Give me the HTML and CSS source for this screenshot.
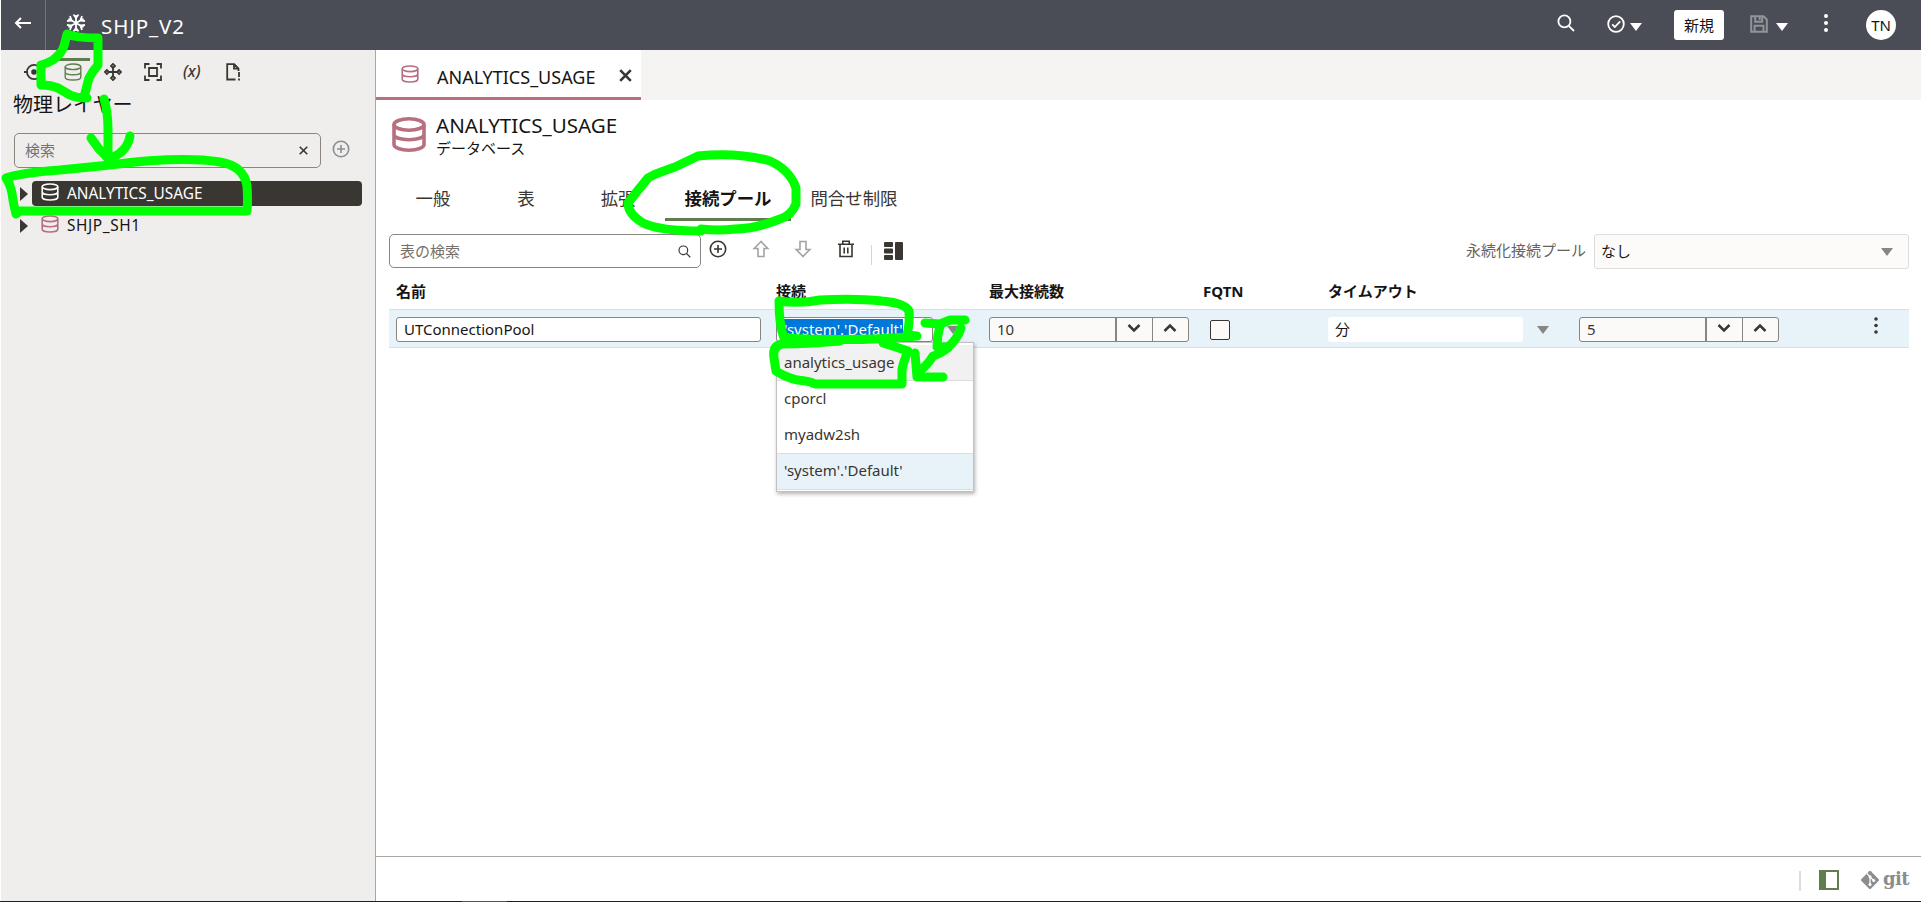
FILE: index.html
```html
<!DOCTYPE html>
<html lang="ja">
<head>
  <meta charset="UTF-8" />
  <meta name="viewport" content="width=device-width, initial-scale=1.0"/>
  <title>SHJP_V2</title>
  <link rel="stylesheet" href="styles.css">
</head>
<body>

  <svg class="symbols" width="0" height="0">
    <symbol id="db" viewBox="0 0 18 18">
      <ellipse cx="9" cy="3.8" rx="7.8" ry="2.8"/>
      <path d="M1.2 3.8v10.4c0 1.6 3.5 2.8 7.8 2.8s7.8-1.2 7.8-2.8V3.8M1.2 9c0 1.6 3.5 2.8 7.8 2.8s7.8-1.2 7.8-2.8"/>
    </symbol>
    <symbol id="plus" viewBox="0 0 18 18">
      <circle cx="9" cy="9" r="7.7"/>
      <path d="M9 5v8M5 9h8"/>
    </symbol>
    <symbol id="search" viewBox="0 0 18 18">
      <circle cx="7.4" cy="7.4" r="6"/>
      <path d="M11.8 11.8l5.2 5.2"/>
    </symbol>
    <symbol id="down" viewBox="0 0 14 10">
      <path d="M1.5 2L7 7.5L12.5 2"/>
    </symbol>
    <symbol id="up" viewBox="0 0 14 10">
      <path d="M1.5 8L7 2.5L12.5 8"/>
    </symbol>
  </svg>

  <div class="navbar">
    <div class="back">
      <svg width="18" height="12" viewBox="0 0 18 12"><path d="M17 6H2M7 1L2 6l5 5"/></svg>
    </div>
    <svg class="flake" width="20" height="20" viewBox="0 0 20 20">
      <path d="M10 2v16M2.5 5.7l15 8.6M2.5 14.3l15-8.6"/>
      <path d="M7.5 1.5L10 5l2.5-3.5M7.5 18.5L10 15l2.5 3.5M1 8l4.6-.6L4 3M19 8l-4.6-.6L16 3M1 12l4.6.6L4 17M19 12l-4.6.6L16 17"/>
    </svg>
    <h1>SHJP_V2</h1>
    <div class="nav-right">
      <svg class="nav-search" width="18" height="18"><use href="#search"/></svg>
      <svg class="nav-check" width="18" height="18" viewBox="0 0 18 18"><circle cx="9" cy="9" r="7.8"/><path d="M5.2 9.4l2.6 2.6 5.4-5.6"/></svg>
      <span class="caret"></span>
      <button class="new-btn">新規</button>
      <svg class="nav-save" width="18" height="18" viewBox="0 0 18 18"><path d="M1.2 1.2h12.3l3.3 3.3v12.3H1.2zM5.2 1.2v5.6h7V1.2M9.7 2v3M4.6 16.8v-6h8.8v6"/></svg>
      <span class="caret caret-save"></span>
      <svg class="nav-dots" width="4" height="18" viewBox="0 0 4 18"><circle cx="2" cy="2" r="2"/><circle cx="2" cy="9" r="2"/><circle cx="2" cy="16" r="2"/></svg>
      <div class="avatar">TN</div>
    </div>
  </div>

  <div class="main">
    <div class="sidebar">
      <div class="layers">
        <div class="layer"><svg width="18" height="18" viewBox="0 0 18 18"><path d="M0 9h4M15.5 4.2A7.2 7.2 0 1 0 15.5 13.8"/><circle class="dot" cx="10" cy="9" r="2.8"/></svg></div>
        <div class="layer active"><svg width="18" height="18"><use href="#db"/></svg></div>
        <div class="layer"><svg width="18" height="18" viewBox="0 0 18 18"><path d="M9 4v10M4 9h10"/><path d="M9 .9L11 2.9 9 4.9 7 2.9zM9 13.1L11 15.1 9 17.1 7 15.1zM.9 9L2.9 7 4.9 9 2.9 11zM13.1 9L15.1 7 17.1 9 15.1 11z"/></svg></div>
        <div class="layer"><svg width="18" height="18" viewBox="0 0 18 18"><path d="M5 5h8v8H5zM1 5.5V1h4.5M12.5 1H17v4.5M17 12.5V17h-4.5M5.5 17H1v-4.5"/></svg></div>
        <div class="layer fx">(x)</div>
        <div class="layer"><svg width="18" height="18" viewBox="0 0 18 18"><path d="M11.5 16.5H3.2V1.2h7l4.3 4.300v2.500M10 1.500v4.200h4M15 9v5M15 15.500v2"/></svg></div>
      </div>
      <h2>物理レイヤー</h2>
      <div class="side-search">
        <div class="search-box">
          <span>検索</span>
          <svg width="9" height="9" viewBox="0 0 9 9"><path d="M.7.7l7.6 7.6M8.3.7L.7 8.3"/></svg>
        </div>
        <svg class="add" width="18" height="18"><use href="#plus"/></svg>
      </div>
      <div class="tree">
        <div class="node selected">
          <span class="arrow"></span>
          <div class="node-label"><svg width="18" height="18"><use href="#db"/></svg>ANALYTICS_USAGE</div>
        </div>
        <div class="node">
          <span class="arrow"></span>
          <div class="node-label wide"><svg width="18" height="18"><use href="#db"/></svg>SHJP_SH1</div>
        </div>
      </div>
    </div>

    <div class="content">
      <div class="doc-tabs">
        <div class="doc-tab">
          <svg class="pink" width="18" height="18"><use href="#db"/></svg>
          <span>ANALYTICS_USAGE</span>
          <svg class="close" width="13" height="13" viewBox="0 0 13 13"><path d="M1.2 1.2l10.6 10.6M11.8 1.2L1.2 11.8"/></svg>
        </div>
      </div>

      <div class="page">
        <div class="heading">
          <svg class="big-db" width="34" height="35" viewBox="0 0 34 35"><ellipse cx="17" cy="7.5" rx="15" ry="5.7"/><path d="M2 7.5v20c0 3.2 6.7 5.7 15 5.7s15-2.5 15-5.7v-20M2 17.5c0 3.200 6.700 5.200 15 5.200s15-2 15-5.200"/></svg>
          <div>
            <h3>ANALYTICS_USAGE</h3>
            <p>データベース</p>
          </div>
        </div>

        <div class="tabs">
          <div class="tab">一般</div>
          <div class="tab">表</div>
          <div class="tab">拡張</div>
          <div class="tab current">接続プール</div>
          <div class="tab">問合せ制限</div>
        </div>

        <div class="toolbar">
          <div class="search-box table-search">
            <span>表の検索</span>
            <svg width="13" height="13"><use href="#search"/></svg>
          </div>
          <div class="tools">
            <svg width="18" height="18"><use href="#plus"/></svg>
            <svg class="off" width="18" height="18" viewBox="0 0 18 18"><path d="M9 1.5L2.2 8.5H6v8h6v-8h3.8z"/></svg>
            <svg class="off" width="18" height="18" viewBox="0 0 18 18"><path d="M9 16.5L2.2 9.5H6v-8h6v8h3.8z"/></svg>
            <svg width="18" height="18" viewBox="0 0 18 18"><path d="M1 4.2h16M5.8 4V1.2h6.4V4M3 4.5v12h12v-12M7.2 7.5v6M10.8 7.5v6"/></svg>
          </div>
          <div class="sep"></div>
          <svg class="cols" width="19" height="18" viewBox="0 0 19 18"><rect x="0" y="0" width="9" height="5" rx="1"/><rect x="0" y="6.5" width="9" height="5" rx="1"/><rect x="0" y="13" width="9" height="5" rx="1"/><rect x="11" y="0" width="8" height="18" rx="1"/></svg>
          <label>永続化接続プール</label>
          <div class="pool-select">なし<span class="caret gray"></span></div>
        </div>

        <div class="row head">
          <div>名前</div>
          <div>接続</div>
          <div>最大接続数</div>
          <div>FQTN</div>
          <div>タイムアウト</div>
        </div>
        <div class="row data">
          <div><div class="input name">UTConnectionPool</div></div>
          <div class="conn">
            <div class="input"><span class="picked">'system'.'Default'</span></div>
            <span class="caret gray"></span>
            <div class="menu">
              <div class="item hover">analytics_usage</div>
              <div class="item">cporcl</div>
              <div class="item">myadw2sh</div>
              <div class="item on">'system'.'Default'</div>
            </div>
          </div>
          <div>
            <div class="number"><span>10</span><i><svg width="14" height="10"><use href="#down"/></svg></i><i><svg width="14" height="10"><use href="#up"/></svg></i></div>
          </div>
          <div><div class="check"></div></div>
          <div class="unit"><div class="unit-value">分</div><span class="caret gray"></span></div>
          <div>
            <div class="number"><span>5</span><i><svg width="14" height="10"><use href="#down"/></svg></i><i><svg width="14" height="10"><use href="#up"/></svg></i></div>
          </div>
          <svg class="dots" width="4" height="18" viewBox="0 0 4 18"><circle cx="2" cy="2" r="1.8"/><circle cx="2" cy="8.5" r="1.8"/><circle cx="2" cy="15" r="1.8"/></svg>
        </div>
      </div>

      <div class="footer">
        <div class="foot-sep"></div>
        <div class="panel-icon"></div>
        <svg class="git-logo" width="20" height="20" viewBox="0 0 20 20"><rect x="3.2" y="3.2" width="13.6" height="13.6" rx="1.2" transform="rotate(45 10 10)"/><path d="M7 3.5l3 3.2v8.3M10 7l4 3.8"/><circle cx="10" cy="6.8" r="1.5"/><circle cx="10" cy="14.5" r="1.5"/><circle cx="13.7" cy="10.5" r="1.5"/></svg>
        <span class="git">git</span>
      </div>
    </div>
  </div>
  <div class="bottom-line"><span></span></div>

  <!-- marker strokes -->
  <svg class="marker" width="1921" height="902" viewBox="0 0 1921 902">
    <path d="M87 98Q76 98 70 95L58 88Q51 85 41 85V65Q48 63 53 60Q62 53 64 46L67 34Q76 38 98 38V65Q92 72 89 78L84 97"/>
    <path d="M104 99Q108 112 108 130V158M91 138L99 149L108 158M130 136Q127 153 108 159"/>
    <path d="M6 178Q20 173 60 170L110 165Q180 156 220 162Q244 166 247 186Q248 200 247 211H20L16 214Q13 202 12 193Q10 184 6 178z"/>
    <path d="M701 231Q660 231 643 223Q628 214 628 203Q638 190 648 178Q654 174 675 167L698 156Q738 152 770 161Q790 170 796 188V204Q791 216 780 219Q755 229 735 229Q718 231 701 229"/>
    <path d="M779 301Q800 304 820 300Q855 298 882 301Q905 303 909 311Q910 322 907 335L917 336Q860 342 784 338Q779 325 779 301z"/>
    <path d="M840 341Q805 344 782 344Q772 346 774 358L776 371Q785 377 797 380Q810 381 815 384H902V370Q903 363 908 351Q896 347 883 343"/>
    <path d="M925 323L940 324L950 320L965 320M940 326Q937 336 937 347H948Q957 340 961 328M948 348Q940 354 933 356Q927 366 918 372M915 353L917 377H943"/>
  </svg>

</body>
</html>
```

FILE: styles.css
```css
* {
  margin: 0;
  padding: 0;
  box-sizing: border-box;
}

body {
  font-family: "Noto Sans", "Noto Sans CJK JP", sans-serif;
  font-size: 15px;
  color: #161513;
  background: #fff;
  width: 1921px;
  height: 902px;
  overflow: hidden;
}

svg {
  display: block;
  flex: none;
  fill: none;
  stroke: currentColor;
  stroke-width: 1.6;
}

.symbols {
  position: absolute;
}

.navbar {
  height: 50px;
  margin-left: 1px;
  background: #4a4d55;
  color: #fff;
  display: flex;
  align-items: center;
}

.back {
  width: 45px;
  height: 50px;
  padding: 17px 0 0 13px;
  border-right: 1px solid #73757b;
}

.back svg {
  stroke-width: 2;
}

.flake {
  margin: 0 15px 4px 20px;
  stroke-width: 1.8;
}

.navbar h1 {
  font-size: 20.5px;
  font-weight: 400;
  line-height: 50px;
  letter-spacing: 0.9px;
  padding-top: 1px;
}

.nav-right {
  display: flex;
  align-items: center;
  height: 50px;
  margin-left: auto;
  padding-right: 25px;
}

.nav-search {
  margin: 0 32px 4px 0;
}

.nav-search,
.nav-check {
  stroke-width: 1.8;
}

.nav-check {
  margin-bottom: 2px;
}

.caret {
  flex: none;
  width: 0;
  height: 0;
  margin: 3px 0 0 5px;
  border: 6px solid transparent;
  border-top: 8px solid #fff;
  border-bottom: 0;
}

.gray {
  border-top: 8px solid #8a8582;
  margin: 0;
}

.new-btn {
  width: 50px;
  height: 30px;
  margin: 0 26px 0 32px;
  border: none;
  border-radius: 3px;
  background: #fff;
  color: #161513;
  font-family: inherit;
  font-size: 15px;
  line-height: 28px;
}

.nav-save {
  margin-bottom: 2px;
  stroke: #929499;
  stroke-width: 2;
}

.caret-save {
  margin-left: 8px;
}

.nav-dots {
  fill: #fff;
  stroke: none;
  margin: 0 38px 4px 36px;
}

.avatar {
  width: 30px;
  height: 30px;
  border-radius: 50%;
  background: #fff;
  color: #161513;
  text-align: center;
  line-height: 30px;
}

.main {
  display: flex;
  height: 851px;
  margin-left: 1px;
}

.sidebar {
  width: 375px;
  background: #f0eeec;
  border-right: 1px solid #a9a7a5;
}

.layers {
  display: flex;
  gap: 6px;
  padding: 8px 0 0 15px;
  color: #3a3631;
}

.layer {
  width: 34px;
  height: 30px;
  padding: 2px 0 0 8px;
  border-top: 3px solid transparent;
}

.active {
  color: #5f7d4f;
  border-color: #5f7d4f;
}

.layer svg {
  stroke-width: 1.8;
}

.active svg {
  stroke-width: 1.4;
}

.dot {
  fill: #3a3631;
  stroke: none;
}

.fx {
  padding: 0 0 0 7px;
  font-size: 16px;
  font-style: italic;
  font-weight: 500;
  line-height: 20px;
}

.sidebar h2 {
  font-size: 20px;
  font-weight: 400;
  line-height: 30px;
  margin: 2px 0 0 12px;
}

.side-search {
  display: flex;
  align-items: center;
  gap: 11px;
  margin: 13px 0 0 13px;
}

.search-box {
  width: 307px;
  height: 35px;
  display: flex;
  align-items: center;
  justify-content: space-between;
  padding: 0 12px 0 10px;
  border: 1px solid #8b8580;
  border-radius: 5px;
  background: #fff;
  color: #76716c;
  line-height: 33px;
}

.sidebar .search-box {
  background: #f0eeec;
}

.search-box svg {
  color: #3a3631;
}

.add {
  color: #8a8e91;
  margin-bottom: 4px;
}

.tree {
  margin-top: 13px;
}

.node {
  display: flex;
  align-items: center;
  height: 25px;
  padding-left: 19px;
  margin-bottom: 7px;
}

.arrow {
  border: 7px solid transparent;
  border-left: 8px solid #3a3631;
  border-right: 0;
  margin-right: 4px;
}

.node-label {
  display: flex;
  align-items: center;
  gap: 8px;
  width: 330px;
  height: 25px;
  padding-left: 9px;
  border-radius: 4px;
  line-height: 25px;
  font-size: 15.4px;
}

.wide {
  letter-spacing: 0.6px;
}

.node-label svg {
  color: #b87080;
  margin-bottom: 3px;
}

.selected .node-label {
  background: #3a3631;
  color: #fff;
}

.selected svg {
  color: #fff;
}

.content {
  flex: 1;
  display: flex;
  flex-direction: column;
}

.doc-tabs {
  height: 50px;
  background: #f5f4f2;
}

.doc-tab {
  display: flex;
  align-items: center;
  width: 265px;
  height: 50px;
  padding: 3px 0 0 25px;
  background: #fff;
  border-bottom: 3px solid #b87080;
}

.doc-tab span {
  width: 182px;
  margin-left: 18px;
  font-size: 18px;
  line-height: 30px;
  padding-top: 3px;
}

.pink {
  color: #b87080;
  margin-bottom: 3px;
}

.close {
  color: #3a3631;
  stroke-width: 2.6;
}

.page {
  flex: 1;
  padding: 13px 12px 0 13px;
}

.heading {
  display: flex;
  gap: 10px;
  height: 52px;
  padding-left: 3px;
}

.big-db {
  color: #b87080;
  stroke-width: 3.6;
  margin-top: 4px;
}

.heading h3 {
  font-size: 20.6px;
  font-weight: 400;
  line-height: 24px;
}

.heading p {
  font-size: 15px;
  line-height: 22px;
}

.tabs {
  display: flex;
  height: 56px;
  padding: 16px 0 0 7px;
  font-size: 17.4px;
  color: #3a3631;
}

.tab {
  height: 40px;
  padding: 0 19.5px;
  line-height: 34px;
}

.tab:nth-child(1) {
  margin-right: 28px;
}

.tab:nth-child(2) {
  margin-right: 27px;
}

.tab:nth-child(3) {
  margin-right: 10px;
}

.current {
  color: #161513;
  font-weight: 700;
  border-bottom: 3px solid #5f7d4f;
}

.toolbar {
  display: flex;
  height: 58px;
  padding-top: 13px;
}

.table-search {
  width: 312px;
  height: 34px;
  padding: 0 9px 0 10px;
}

.tools {
  display: flex;
  gap: 24.5px;
  margin: 6px 0 0 8px;
  color: #3a3631;
}

.off {
  color: #a5a3a1;
}

.sep {
  width: 1px;
  height: 20px;
  margin: 11px 12px 0 16px;
  background: #d6d4d2;
}

.cols {
  fill: #3a3631;
  stroke: none;
  margin-top: 8px;
}

.toolbar label {
  margin: 0 8px 0 auto;
  color: #67625d;
  line-height: 32px;
}

.pool-select {
  display: flex;
  align-items: center;
  justify-content: space-between;
  width: 315px;
  height: 35px;
  padding: 0 15px 0 6px;
  border: 1px solid #dfdddb;
  border-radius: 3px;
  background: #fcfbfa;
  line-height: 33px;
}

.row {
  display: grid;
  grid-template-columns: 380px 213px 214px 125px 251px 295px 4px;
  padding-left: 7px;
}

.head {
  height: 30px;
  font-weight: 700;
  line-height: 24px;
}

.data {
  height: 39px;
  padding-top: 7px;
  background: #e8f3f9;
  border-top: 1px solid #dcdfe1;
  border-bottom: 1px solid #dcdfe1;
}

.input {
  height: 25px;
  border: 1px solid #8b8580;
  border-radius: 3px;
  background: #fff;
  padding-left: 7px;
  line-height: 23px;
}

.name {
  width: 365px;
}

.conn {
  position: relative;
  display: flex;
  align-items: center;
  height: 25px;
}

.conn .input {
  width: 157px;
  margin-right: 14px;
}

.picked {
  display: inline-block;
  height: 20px;
  line-height: 21px;
  background: #0078d7;
  color: #fff;
}

.menu {
  position: absolute;
  left: 0;
  top: 25px;
  width: 198px;
  height: 150px;
  padding-top: 2px;
  border: 1px solid #c4c2c0;
  background: #fff;
  box-shadow: 1px 2px 4px rgba(0, 0, 0, 0.3);
}

.item {
  height: 36px;
  padding-left: 7px;
  line-height: 34px;
  color: #3a3631;
  border-bottom: 1px solid transparent;
}

.hover {
  background: #f1f1f1;
  border-color: #dcdcdc;
}

.on {
  height: 37px;
  line-height: 33px;
  background: #e8f3f9;
  border-top: 1px solid #dcdfe1;
  border-bottom: 1px solid #dcdfe1;
}

.number {
  display: flex;
  width: 200px;
  height: 25px;
  border: 1px solid #8b8580;
  border-radius: 3px;
  background: #fcfaf8;
  color: #3a3631;
  line-height: 23px;
}

.number span {
  width: 126px;
  padding-left: 7px;
  border-right: 1px solid #8b8580;
}

.number i {
  width: 36px;
  padding: 5px 0 0 10px;
  border-left: 1px solid #8b8580;
}

.number svg {
  stroke-width: 2.5;
}

.check {
  width: 20px;
  height: 20px;
  margin: 3px 0 0 7px;
  border: 1.5px solid #3a3631;
  border-radius: 2px;
  background: #fcfaf8;
}

.unit {
  display: flex;
  align-items: center;
  height: 25px;
}

.unit-value {
  width: 195px;
  height: 25px;
  margin-right: 14px;
  padding-left: 7px;
  background: #fff;
  border-radius: 3px;
  line-height: 24px;
}

.dots {
  fill: #3a3631;
  stroke: none;
}

.footer {
  height: 45px;
  display: flex;
  align-items: flex-start;
  padding: 13px 12px 0 0;
  border-top: 1px solid #a9a7a5;
}

.foot-sep {
  width: 2px;
  height: 20px;
  margin: 1px 18px 0 auto;
  background: #dfdedb;
}

.panel-icon {
  width: 20px;
  height: 20px;
  margin-right: 21px;
  border: 2px solid #5f7d4f;
  border-left-width: 7px;
}

.git-logo {
  fill: #8a8e91;
  stroke: none;
}

.git-logo path {
  fill: none;
  stroke: #fff;
  stroke-width: 1.2;
}

.git-logo circle {
  fill: #fff;
}

.git {
  margin-left: 3px;
  color: #8a8e91;
  font-family: "DejaVu Serif", serif;
  font-size: 18px;
  font-weight: 700;
  line-height: 17px;
  letter-spacing: -0.6px;
}

.bottom-line {
  height: 1px;
  background: #1a2028;
  padding-left: 462px;
}

.bottom-line span {
  display: block;
  width: 45px;
  height: 1px;
  background: #4a5560;
}

.marker {
  position: absolute;
  left: 0;
  top: 0;
  stroke: #0f0;
  stroke-width: 9;
  stroke-linecap: round;
  stroke-linejoin: round;
}
```
